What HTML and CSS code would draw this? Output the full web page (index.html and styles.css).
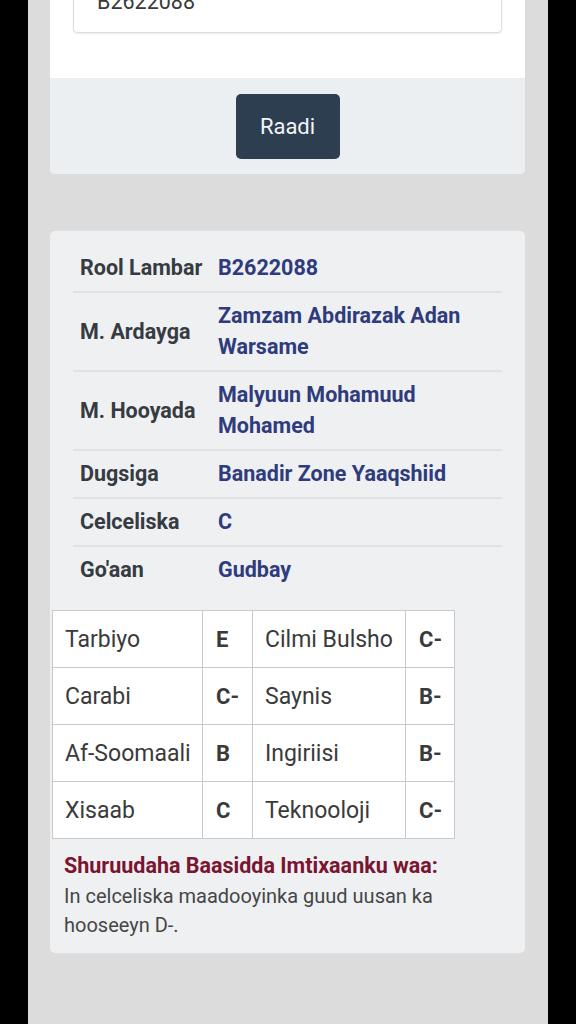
FILE: index.html
```html
<!DOCTYPE html>
<html>
<head>
<meta charset="utf-8">
<link rel="stylesheet" href="styles.css">
</head>
<body>
<div class="screen">
  <div class="search-card">
    <div class="search-body">
      <div class="input">B2622088</div>
    </div>
    <div class="search-foot">
      <button class="btn">Raadi</button>
    </div>
  </div>

  <div class="result-card">
    <div class="info">
      <div class="row"><div class="label">Rool Lambar</div><div class="value">B2622088</div></div>
      <div class="row"><div class="label">M. Ardayga</div><div class="value">Zamzam Abdirazak Adan Warsame</div></div>
      <div class="row"><div class="label">M. Hooyada</div><div class="value">Malyuun Mohamuud Mohamed</div></div>
      <div class="row"><div class="label">Dugsiga</div><div class="value">Banadir Zone Yaaqshiid</div></div>
      <div class="row"><div class="label">Celceliska</div><div class="value">C</div></div>
      <div class="row last"><div class="label">Go'aan</div><div class="value">Gudbay</div></div>
    </div>

    <table class="grades">
      <colgroup><col class="c1"><col class="c2"><col class="c3"><col class="c4"></colgroup>
      <tr><td>Tarbiyo</td><td class="g">E</td><td>Cilmi Bulsho</td><td class="g">C-</td></tr>
      <tr><td>Carabi</td><td class="g">C-</td><td>Saynis</td><td class="g">B-</td></tr>
      <tr><td>Af-Soomaali</td><td class="g">B</td><td>Ingiriisi</td><td class="g">B-</td></tr>
      <tr><td>Xisaab</td><td class="g">C</td><td>Teknooloji</td><td class="g">C-</td></tr>
    </table>

    <div class="note">
      <div class="note-title">Shuruudaha Baasidda Imtixaanku waa:</div>
      <div class="note-text">In celceliska maadooyinka guud uusan ka hooseeyn D-.</div>
    </div>
  </div>
</div>
</body>
</html>
```

FILE: styles.css
```css
html, body {
  margin: 0;
  padding: 0;
  background: #000;
  height: 1024px;
  overflow: hidden;
}
.screen {
  width: 520px;
  margin-left: 28px;
  height: 1024px;
  background: #dcdcdc;
  font-family: Roboto, "Noto Sans", sans-serif;
  padding-top: 1px;
  box-sizing: border-box;
}
.search-card {
  margin: -56px 23px 0 22px;
  background: #fff;
  border-radius: 5px;
  overflow: hidden;
}
.search-body {
  padding: 24px 23px 45px 23px;
}
.input {
  height: 62px;
  border: 1px solid #dadde0;
  border-radius: 4px;
  box-shadow: 0 1px 2px rgba(0,0,0,0.08);
  display: flex;
  align-items: center;
  padding-left: 23px;
  font-size: 21.5px;
  color: #3a3a3a;
}
.search-foot {
  background: #eceff1;
  height: 96px;
  display: flex;
  justify-content: center;
  align-items: flex-start;
  padding-top: 16px;
  box-sizing: border-box;
}
.btn {
  width: 104px;
  height: 65px;
  background: #2c3e50;
  border: none;
  border-radius: 5px;
  color: #f2f4f6;
  font-family: Roboto, "Noto Sans", sans-serif;
  font-size: 22px;
  padding: 0;
}
.result-card {
  margin: 57px 23px 0 22px;
  background: #eef0f2;
  border-radius: 5px;
  padding: 14px 0 13px 0;
}
.info {
  padding: 0 23px;
}
.row {
  display: grid;
  grid-template-columns: 145px 1fr;
  align-items: center;
  border-bottom: 2px solid #e0e3e6;
  padding: 7px 0 8px 0;
  line-height: 31px;
  font-size: 21.5px;
  font-weight: 700;
}
.row.last {
  border-bottom: none;
}
.label {
  padding-left: 7px;
  color: #363b42;
}
.value {
  color: #2f3b7c;
  padding-right: 14px;
}
.grades {
  margin: 17px 0 0 2px;
  border-collapse: collapse;
  background: #fff;
  font-size: 23px;
  color: #3a3a3a;
}
.c1 { width: 150px; }
.c2 { width: 50px; }
.c3 { width: 153px; }
.c4 { width: 49px; }
.grades tr {
  height: 57px;
}
.grades td {
  border: 1.5px solid #c9c9c9;
  padding: 0 0 0 12px;
  white-space: nowrap;
  font-size: 23px;
}
.grades td.g {
  font-weight: 700;
  font-size: 22px;
  padding-left: 13px;
}
.note {
  padding: 13px 14px 0 14px;
}
.note-title {
  color: #7a1430;
  font-weight: 700;
  font-size: 21.5px;
  line-height: 28px;
}
.note-text {
  color: #464646;
  font-size: 20px;
  line-height: 29px;
  padding-top: 2px;
}
```
